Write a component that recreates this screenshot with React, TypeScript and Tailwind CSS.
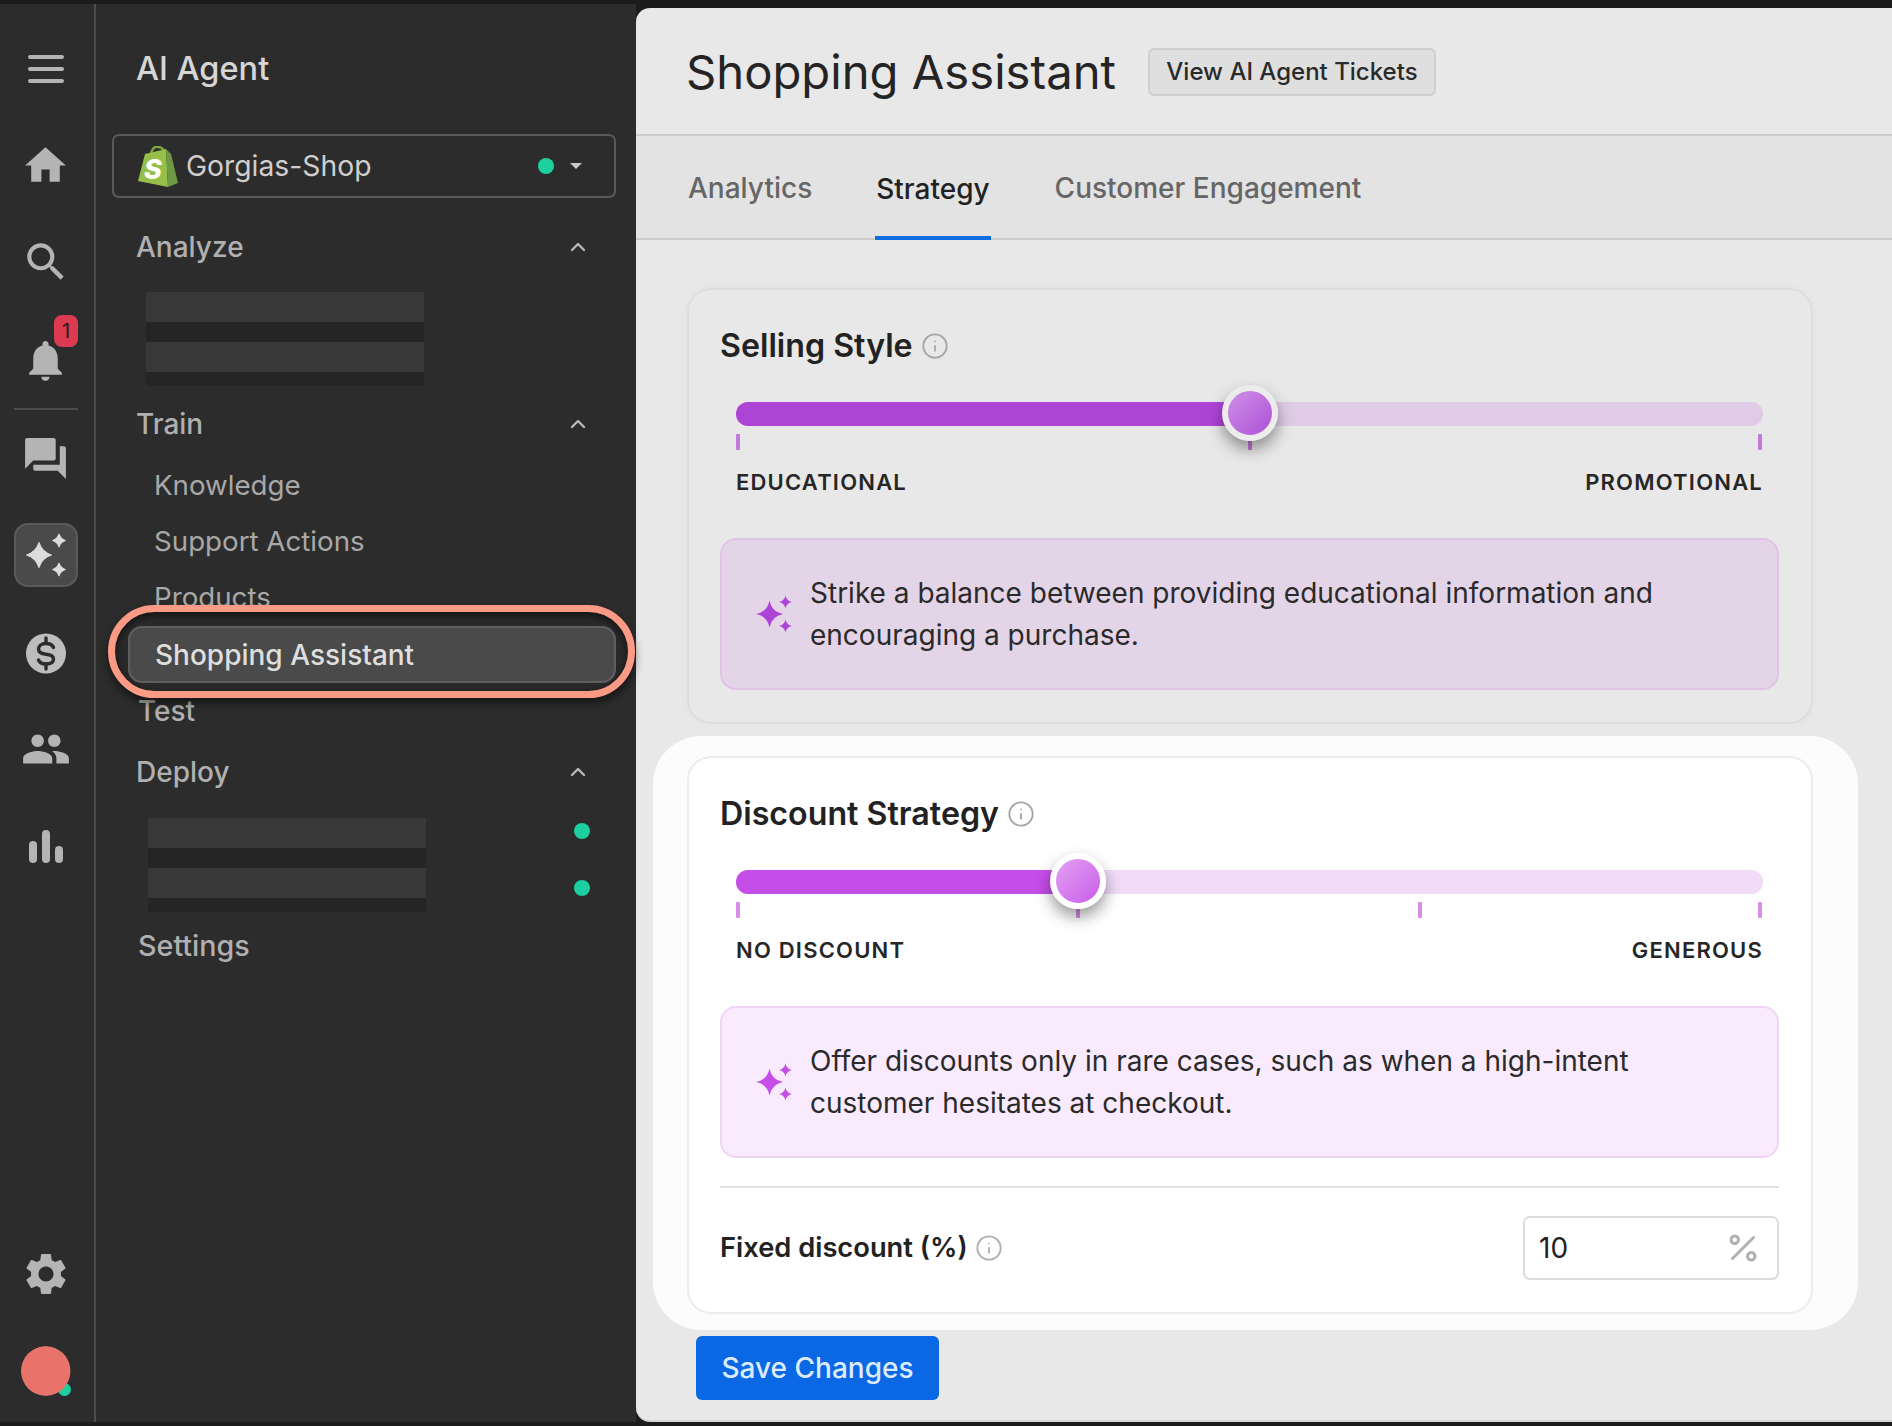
import React from "react";
import { ChevronUp, Info, Percent } from "lucide-react";
import { MdHome, MdSearch, MdNotifications, MdForum, MdPeople, MdSettings } from "react-icons/md";

function star(cx: number, cy: number, r: number, f = 0.16) {
  const k = r * f;
  return `M${cx} ${cy - r}Q${cx + k} ${cy - k} ${cx + r} ${cy}Q${cx + k} ${cy + k} ${cx} ${cy + r}Q${cx - k} ${cy + k} ${cx - r} ${cy}Q${cx - k} ${cy - k} ${cx} ${cy - r}Z`;
}

function Sparkle({ className }: { className: string }) {
  return (
    <svg viewBox="0 0 36 38" className={className} fill="currentColor">
      <path d={star(13.5, 19, 13.5)} />
      <path d={star(29.5, 7, 6.5)} />
      <path d={star(29.5, 31, 6.5)} />
    </svg>
  );
}

function RailSparkle() {
  return (
    <svg viewBox="0 0 40 44" className="w-[40px] h-[44px]" fill="currentColor" stroke="currentColor" strokeWidth="1.2" strokeLinejoin="round">
      <path d={star(13, 22, 12.4, 0.24)} />
      <path d={star(33, 7.5, 6.2, 0.24)} />
      <path d={star(33, 36.5, 6.2, 0.24)} />
    </svg>
  );
}

function DollarCoin() {
  return (
    <svg viewBox="0 0 40 41" className="w-[40px] h-[41px]">
      <circle cx="20" cy="20.5" r="20" fill="#bdbdbd" />
      <path
        d="M27.5 14.5C26.5 12 23.5 10.5 20 10.5C15.5 10.5 12.5 12.8 12.5 16C12.5 19.5 15.5 20.8 20 21.2C24.5 21.6 27.5 23 27.5 26C27.5 29.2 24.5 31 20 31C16.5 31 13.5 29.5 12.5 27"
        fill="none"
        stroke="#2c2c2c"
        strokeWidth="3.4"
        strokeLinecap="round"
      />
      <path d="M20 5V10M20 31V36" fill="none" stroke="#2c2c2c" strokeWidth="3.4" strokeLinecap="round" />
    </svg>
  );
}

function ShopifyBag() {
  return (
    <svg viewBox="0 0 40 41" className="w-[40px] h-[41px] shrink-0">
      <path d="M13 10C13 3 17 0 20 1C24 1 27 4 27 10" fill="none" stroke="#7fa83c" strokeWidth="2.5" />
      <path d="M7 8L28 3L30 41L0 35Z" fill="#95bf47" />
      <path d="M28 3L33 8L40 37L30 41Z" fill="#6f9a44" />
      <text x="6" y="33" fontSize="27" fontWeight="800" fontStyle="italic" fill="#ffffff" fontFamily="Inter, sans-serif">S</text>
    </svg>
  );
}

function RailSlot({ children, className = "" }: { children: React.ReactNode; className?: string }) {
  return <div className={`h-[40px] w-full flex items-center justify-center text-[#b4b4b4] ${className}`}>{children}</div>;
}

function Rail() {
  return (
    <div className="w-[96px] h-full shrink-0 border-r-2 border-[#4c4c4c] flex flex-col items-center pt-[45px] pb-[26px] pr-[3px]">
      <RailSlot>
        <div className="w-[36px] flex flex-col gap-[8px]">
          <div className="h-[4px] rounded-full bg-[#b4b4b4]" />
          <div className="h-[4px] rounded-full bg-[#b4b4b4]" />
          <div className="h-[4px] rounded-full bg-[#b4b4b4]" />
        </div>
      </RailSlot>
      <RailSlot className="mt-[56px]"><MdHome size={49} /></RailSlot>
      <RailSlot className="mt-[57px]"><MdSearch size={50} /></RailSlot>
      <RailSlot className="mt-[58px] relative">
        <MdNotifications size={49} />
        <span className="absolute left-[54px] -top-[25px] w-[24px] h-[32px] rounded-[8px] bg-[#dc3a50] text-[#1f1f1f] text-[20px] leading-[32px] text-center">1</span>
      </RailSlot>
      <div className="mt-[28px] w-[64px] h-[2px] bg-[#4c4c4c]" />
      <RailSlot className="mt-[28px]"><MdForum size={49} /></RailSlot>
      <div className="mt-[45px] w-[64px] h-[64px] rounded-[14px] bg-[#4a4a4a] border-2 border-[#5a5a5a] flex items-center justify-center text-[#dcdcdc]">
        <RailSparkle />
      </div>
      <RailSlot className="mt-[46px]"><DollarCoin /></RailSlot>
      <RailSlot className="mt-[56px]"><MdPeople size={50} /></RailSlot>
      <RailSlot className="mt-[57px]">
        <div className="flex items-end gap-[5px] h-[33px]">
          <div className="w-[8px] h-[22px] rounded-full bg-[#b4b4b4]" />
          <div className="w-[8px] h-[33px] rounded-full bg-[#b4b4b4]" />
          <div className="w-[8px] h-[17px] rounded-full bg-[#b4b4b4]" />
        </div>
      </RailSlot>
      <RailSlot className="mt-auto"><MdSettings size={50} /></RailSlot>
      <div className="mt-[52px] relative w-[50px] h-[50px]">
        <div className="absolute right-0 bottom-0 w-[13px] h-[13px] rounded-full bg-[#1cd09f]" />
        <div className="absolute inset-0 rounded-full bg-[#e8736b] [clip-path:circle(50%)]" />
      </div>
    </div>
  );
}

function SectionHead({ label, className = "" }: { label: string; className?: string }) {
  return (
    <div className={`h-[40px] flex items-center justify-between pl-[40px] pr-[46px] text-[28px] font-medium text-[#b0b0b0] ${className}`}>
      <span>{label}</span>
      <ChevronUp size={24} strokeWidth={2.4} className="-mt-[1px] text-[#b8b8b8]" />
    </div>
  );
}

function SkeletonBar({ last }: { last?: boolean }) {
  return (
    <div className="w-[278px] shrink-0">
      <div className="h-[30px] bg-[#383838]" />
      <div className={`${last ? "h-[14px]" : "h-[20px]"} bg-[#252525]`} />
    </div>
  );
}

function NavItem({ label }: { label: string }) {
  return <div className="h-[56px] flex items-center pl-[58px] pt-[2px] text-[27.7px] text-[#a8a8a8]">{label}</div>;
}

function Panel() {
  return (
    <div className="w-[540px] h-full shrink-0 flex flex-col pt-[45px]">
      <div className="h-[40px] flex items-center pl-[40px] text-[32.5px] font-medium text-[#d6d6d6]">AI Agent</div>
      <div className="mt-[45px] ml-[16px] w-[504px] h-[64px] shrink-0 rounded-[7px] border-2 border-[#5a5a5a] flex items-center pl-[24px] pr-[32px]">
        <ShopifyBag />
        <span className="ml-[8px] text-[28.3px] text-[#cfcfcf]">Gorgias-Shop</span>
        <span className="ml-auto w-[16px] h-[16px] rounded-full bg-[#1cd09f]" />
        <span className="ml-[16px] w-0 h-0 border-x-[6px] border-x-transparent border-t-[6px] border-t-[#c8c8c8]" />
      </div>
      <SectionHead label="Analyze" className="mt-[29px]" />
      <div className="mt-[25px] ml-[50px] flex flex-col">
        <SkeletonBar />
        <SkeletonBar last />
      </div>
      <SectionHead label="Train" className="mt-[18px]" />
      <div className="mt-[13px]">
        <NavItem label="Knowledge" />
        <NavItem label="Support Actions" />
        <NavItem label="Products" />
      </div>
      <div className="-mt-[20px] ml-[12px] w-[527px] h-[93px] shrink-0 relative z-10 rounded-full border-[7px] border-[#fb9a85] bg-[#2a2a2a] shadow-[0_5px_9px_rgba(0,0,0,0.55),inset_0_3px_8px_rgba(0,0,0,0.6)] flex items-center pl-[13px] pt-[6px]">
        <div className="w-[488px] h-[57px] rounded-[14px] border-2 border-[#5f5f5f] bg-[#4a4a4a] flex items-center pl-[25px] text-[28px] font-medium text-[#dedede]">
          Shopping Assistant
        </div>
      </div>
      <div className="-mt-[7px] h-[40px] flex items-center pl-[42px] text-[28px] font-medium text-[#b0b0b0]">Test</div>
      <SectionHead label="Deploy" className="mt-[21px]" />
      <div className="mt-[26px] ml-[52px] flex flex-col">
        <div className="flex items-start">
          <SkeletonBar />
          <span className="ml-[148px] mt-[5px] w-[16px] h-[16px] rounded-full bg-[#1cd09f]" />
        </div>
        <div className="flex items-start">
          <SkeletonBar last />
          <span className="ml-[148px] mt-[12px] w-[16px] h-[16px] rounded-full bg-[#1cd09f]" />
        </div>
      </div>
      <div className="mt-[14px] h-[40px] flex items-center pl-[42px] text-[28.7px] font-medium text-[#b0b0b0]">Settings</div>
    </div>
  );
}

type SliderProps = {
  thumb: number;
  ticks: number[];
  fill: string;
  rest: string;
  tick: string;
  knob: string;
  left: string;
  right: string;
};

function Slider({ thumb, ticks, fill, rest, tick, knob, left, right }: SliderProps) {
  return (
    <div className="ml-[16px] w-[1027px]">
      <div className={`relative h-[24px] rounded-full ${rest}`}>
        <div className={`h-full rounded-full ${fill}`} style={{ width: thumb }} />
        <div
          className={`absolute z-10 -top-[17px] -ml-[28px] w-[56px] h-[56px] rounded-full border-[6px] bg-gradient-to-br shadow-[0_8px_16px_rgba(0,0,0,0.4)] ${knob}`}
          style={{ left: thumb }}
        />
      </div>
      <div className="relative mt-[8px] h-[16px]">
        {ticks.map((t) => (
          <div key={t} className={`absolute top-0 w-[4px] h-[16px] rounded-[1px] ${tick}`} style={{ left: t }} />
        ))}
      </div>
      <div className="mt-[17px] h-[30px] flex items-center justify-between text-[22px] font-semibold tracking-[1.2px] text-[#262626]">
        <span>{left}</span>
        <span>{right}</span>
      </div>
    </div>
  );
}

function Callout({ lines, box, icon }: { lines: string[]; box: string; icon: string }) {
  return (
    <div className={`mt-[41px] w-[1059px] h-[152px] shrink-0 rounded-[16px] border-2 flex items-center pl-[34px] ${box}`}>
      <Sparkle className={`w-[36px] h-[38px] shrink-0 ${icon}`} />
      <div className="ml-[18px] text-[28px] leading-[42px] text-[#2a2a2a]">
        {lines.map((l) => (
          <div key={l}>{l}</div>
        ))}
      </div>
    </div>
  );
}

function CardTitle({ label }: { label: string }) {
  return (
    <div className="h-[40px] flex items-center gap-[8px] text-[32.2px] font-semibold text-[#222222]">
      <span>{label}</span>
      <Info size={28} strokeWidth={1.6} className="text-[#a6a6a6]" />
    </div>
  );
}

function Main() {
  return (
    <div className="flex-1 h-[1414px] mt-[8px] rounded-l-[14px] bg-[#e8e8e8] border-b-2 border-[#d4d4d4] overflow-hidden">
      <div className="h-[128px] border-b-2 border-[#cccccc] flex items-center pl-[50px]">
        <span className="mt-[2px] text-[47.2px] text-[#242424]">Shopping Assistant</span>
        <div className="mt-[2px] ml-[32px] w-[288px] h-[48px] rounded-[6px] border-2 border-[#cecece] bg-[#dfdfdf] flex items-center justify-center text-[24px] font-medium text-[#2a2a2a]">
          View AI Agent Tickets
        </div>
      </div>
      <div className="h-[104px] bg-[#e3e3e3] border-b-2 border-[#cccccc] flex gap-[63px] pl-[52px] pt-[2px] text-[28px] font-medium text-[#666666]">
        <div className="flex items-center">Analytics</div>
        <div className="flex items-center h-[102px] pt-[4px] border-b-4 border-[#0f6de0] text-[#222222] px-[1px]">Strategy</div>
        <div className="flex items-center ml-[1px]">Customer Engagement</div>
      </div>
      <div className="mt-[48px] ml-[51px] w-[1126px] h-[436px] rounded-[24px] border-2 border-[#dddddd] shadow-[0_0_8px_rgba(0,0,0,0.03)] pt-[36px] pl-[31px]">
        <CardTitle label="Selling Style" />
        <div className="mt-[36px]">
          <Slider
            thumb={514}
            ticks={[0, 512, 1022]}
            fill="bg-[#ae44d6]"
            rest="bg-[#dfcbe5]"
            tick="bg-[#c07adb]"
            knob="border-[#ececec] from-[#cf8fe6] to-[#ad4fd6]"
            left="EDUCATIONAL"
            right="PROMOTIONAL"
          />
        </div>
        <Callout
          box="bg-[#e4d4e8] border-[#e2c3e8]"
          icon="text-[#ae44d6]"
          lines={["Strike a balance between providing educational information and", "encouraging a purchase."]}
        />
      </div>
      <div className="mt-[12px] ml-[17px] w-[1205px] h-[594px] rounded-[48px] bg-[#fcfcfc] pt-[20px] pl-[34px]">
        <div className="w-[1126px] h-[558px] rounded-[24px] border-2 border-[#ececec] bg-white pt-[36px] pl-[31px]">
          <CardTitle label="Discount Strategy" />
          <div className="mt-[36px]">
            <Slider
              thumb={342}
              ticks={[0, 340, 682, 1022]}
              fill="bg-[#c54de8]"
              rest="bg-[#f1dbf7]"
              tick="bg-[#d88de8]"
              knob="border-white from-[#e3a0f3] to-[#c95be8]"
              left="NO DISCOUNT"
              right="GENEROUS"
            />
          </div>
          <Callout
            box="bg-[#f9ebfd] border-[#f0d4f5]"
            icon="text-[#c54de8]"
            lines={["Offer discounts only in rare cases, such as when a high-intent", "customer hesitates at checkout."]}
          />
          <div className="mt-[28px] w-[1059px] h-[2px] bg-[#e2e2e2]" />
          <div className="mt-[28px] w-[1059px] h-[64px] flex items-center">
            <span className="mt-[1px] text-[27.3px] font-semibold text-[#222222]">Fixed discount (%)</span>
            <Info size={28} strokeWidth={1.6} className="ml-[7px] text-[#b0b0b0]" />
            <div className="ml-auto w-[256px] h-[64px] rounded-[7px] border-2 border-[#dcdcdc] flex items-center justify-between pl-[14px] pr-[16px] text-[28px] text-[#222222]">
              <span>10</span>
              <Percent size={36} strokeWidth={2} className="text-[#b0b0b0]" />
            </div>
          </div>
        </div>
      </div>
      <div className="mt-[6px] ml-[60px] w-[243px] h-[64px] rounded-[6px] bg-[#0a68e4] flex items-center justify-center text-[28px] font-medium text-[#dcebff]">
        Save Changes
      </div>
    </div>
  );
}

export default function App() {
  return (
    <div className="w-[1892px] h-[1426px] overflow-hidden bg-[#1c1c1c] flex font-['Inter',sans-serif]">
      <div className="h-[1418px] mt-[4px] flex bg-[#2c2c2c]">
        <Rail />
        <Panel />
      </div>
      <Main />
    </div>
  );
}
